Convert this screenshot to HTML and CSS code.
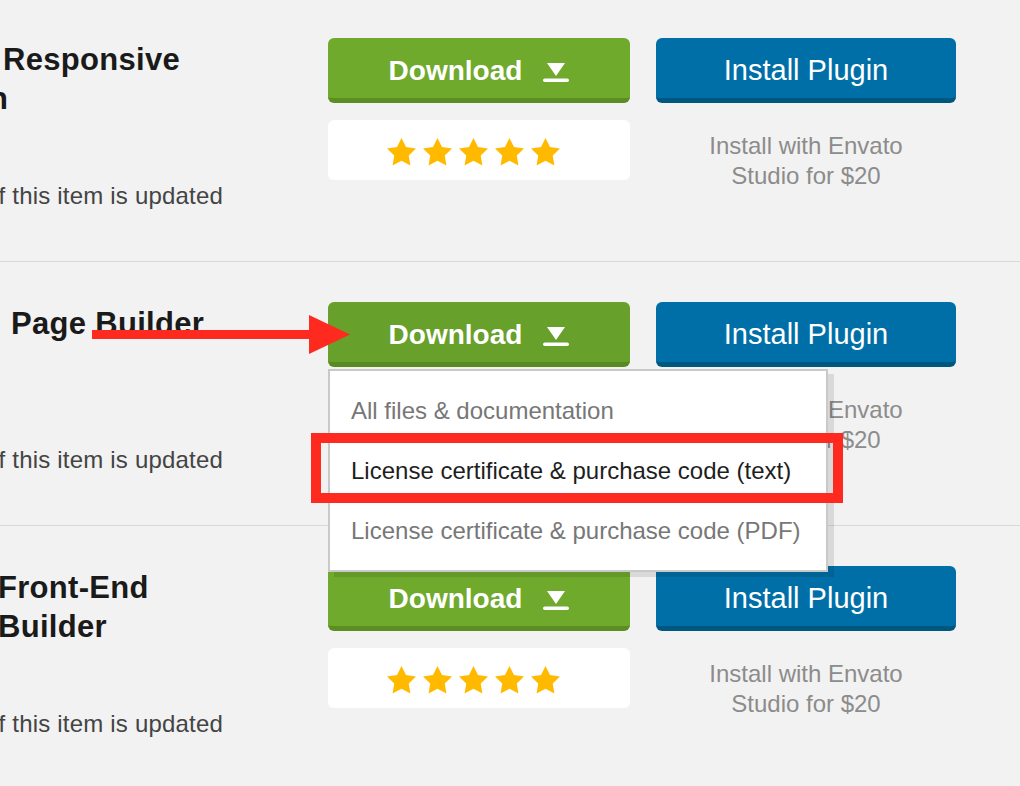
FILE: index.html
```html
<!DOCTYPE html>
<html lang="en">
<head>
<meta charset="utf-8">
<title>Downloads</title>
<link rel="stylesheet" href="styles.css">
</head>
<body>
<div class="page">

  <section class="row">
    <div class="info">
      <h2 class="title"><span class="ln ln-r1a">Responsive</span><span class="ln ln-r1b">Design</span></h2>
      <p class="desc">if this item is updated</p>
    </div>
    <div class="dl">
      <button class="btn-dl"><span>Download</span>
        <svg class="dl-ico" viewBox="0 0 26 20" width="26" height="20"><polygon points="4,0 22,0 13,13" fill="#fff"/><rect x="0" y="15.5" width="26" height="3.6" rx="1.8" fill="#fff"/></svg>
      </button>
      <div class="rating">
        <svg class="star" viewBox="2 2 20 19.3"><path d="M12 2l3.09 6.26L22 9.27l-5 4.87 1.18 6.88L12 17.77l-6.18 3.25L7 14.14 2 9.27l6.91-1.01L12 2z"/></svg>
        <svg class="star" viewBox="2 2 20 19.3"><path d="M12 2l3.09 6.26L22 9.27l-5 4.87 1.18 6.88L12 17.77l-6.18 3.25L7 14.14 2 9.27l6.91-1.01L12 2z"/></svg>
        <svg class="star" viewBox="2 2 20 19.3"><path d="M12 2l3.09 6.26L22 9.27l-5 4.87 1.18 6.88L12 17.77l-6.18 3.25L7 14.14 2 9.27l6.91-1.01L12 2z"/></svg>
        <svg class="star" viewBox="2 2 20 19.3"><path d="M12 2l3.09 6.26L22 9.27l-5 4.87 1.18 6.88L12 17.77l-6.18 3.25L7 14.14 2 9.27l6.91-1.01L12 2z"/></svg>
        <svg class="star" viewBox="2 2 20 19.3"><path d="M12 2l3.09 6.26L22 9.27l-5 4.87 1.18 6.88L12 17.77l-6.18 3.25L7 14.14 2 9.27l6.91-1.01L12 2z"/></svg>
      </div>
    </div>
    <div class="inst">
      <button class="btn-inst">Install Plugin</button>
      <p class="inst-note">Install with Envato<br>Studio for $20</p>
    </div>
  </section>

  <section class="row row-open">
    <div class="info">
      <h2 class="title"><span class="ln ln-r2a">Page Builder</span></h2>
      <p class="desc">if this item is updated</p>
    </div>
    <div class="dl">
      <button class="btn-dl btn-dl-active"><span>Download</span>
        <svg class="dl-ico" viewBox="0 0 26 20" width="26" height="20"><polygon points="4,0 22,0 13,13" fill="#fff"/><rect x="0" y="15.5" width="26" height="3.6" rx="1.8" fill="#fff"/></svg>
      </button>
      <div class="rating">
        <svg class="star" viewBox="2 2 20 19.3"><path d="M12 2l3.09 6.26L22 9.27l-5 4.87 1.18 6.88L12 17.77l-6.18 3.25L7 14.14 2 9.27l6.91-1.01L12 2z"/></svg>
        <svg class="star" viewBox="2 2 20 19.3"><path d="M12 2l3.09 6.26L22 9.27l-5 4.87 1.18 6.88L12 17.77l-6.18 3.25L7 14.14 2 9.27l6.91-1.01L12 2z"/></svg>
        <svg class="star" viewBox="2 2 20 19.3"><path d="M12 2l3.09 6.26L22 9.27l-5 4.87 1.18 6.88L12 17.77l-6.18 3.25L7 14.14 2 9.27l6.91-1.01L12 2z"/></svg>
        <svg class="star" viewBox="2 2 20 19.3"><path d="M12 2l3.09 6.26L22 9.27l-5 4.87 1.18 6.88L12 17.77l-6.18 3.25L7 14.14 2 9.27l6.91-1.01L12 2z"/></svg>
        <svg class="star" viewBox="2 2 20 19.3"><path d="M12 2l3.09 6.26L22 9.27l-5 4.87 1.18 6.88L12 17.77l-6.18 3.25L7 14.14 2 9.27l6.91-1.01L12 2z"/></svg>
      </div>
      <ul class="menu">
        <li class="menu-item">All files &amp; documentation</li>
        <li class="menu-item menu-item-hover">License certificate &amp; purchase code (text)</li>
        <li class="menu-item">License certificate &amp; purchase code (PDF)</li>
        <li class="annot-box"></li>
      </ul>
    </div>
    <div class="inst">
      <button class="btn-inst">Install Plugin</button>
      <p class="inst-note">Install with Envato<br>Studio for $20</p>
    </div>
    <svg class="annot-arrow" viewBox="0 0 258 40" width="258" height="40"><rect x="0" y="15" width="220" height="9" fill="#ff2a1f"/><polygon points="217,0 258,19.5 217,39" fill="#ff2a1f"/></svg>
  </section>

  <section class="row">
    <div class="info">
      <h2 class="title"><span class="ln ln-r3">Front-End</span><span class="ln ln-r3">Builder</span></h2>
      <p class="desc">if this item is updated</p>
    </div>
    <div class="dl">
      <button class="btn-dl"><span>Download</span>
        <svg class="dl-ico" viewBox="0 0 26 20" width="26" height="20"><polygon points="4,0 22,0 13,13" fill="#fff"/><rect x="0" y="15.5" width="26" height="3.6" rx="1.8" fill="#fff"/></svg>
      </button>
      <div class="rating">
        <svg class="star" viewBox="2 2 20 19.3"><path d="M12 2l3.09 6.26L22 9.27l-5 4.87 1.18 6.88L12 17.77l-6.18 3.25L7 14.14 2 9.27l6.91-1.01L12 2z"/></svg>
        <svg class="star" viewBox="2 2 20 19.3"><path d="M12 2l3.09 6.26L22 9.27l-5 4.87 1.18 6.88L12 17.77l-6.18 3.25L7 14.14 2 9.27l6.91-1.01L12 2z"/></svg>
        <svg class="star" viewBox="2 2 20 19.3"><path d="M12 2l3.09 6.26L22 9.27l-5 4.87 1.18 6.88L12 17.77l-6.18 3.25L7 14.14 2 9.27l6.91-1.01L12 2z"/></svg>
        <svg class="star" viewBox="2 2 20 19.3"><path d="M12 2l3.09 6.26L22 9.27l-5 4.87 1.18 6.88L12 17.77l-6.18 3.25L7 14.14 2 9.27l6.91-1.01L12 2z"/></svg>
        <svg class="star" viewBox="2 2 20 19.3"><path d="M12 2l3.09 6.26L22 9.27l-5 4.87 1.18 6.88L12 17.77l-6.18 3.25L7 14.14 2 9.27l6.91-1.01L12 2z"/></svg>
      </div>
    </div>
    <div class="inst">
      <button class="btn-inst">Install Plugin</button>
      <p class="inst-note">Install with Envato<br>Studio for $20</p>
    </div>
  </section>

</div>
</body>
</html>
```

FILE: styles.css
```css
* { box-sizing: border-box; }

html, body {
  margin: 0;
  padding: 0;
  background: #f2f2f2;
  overflow: hidden;
}

body {
  font-family: "Liberation Sans", Arial, sans-serif;
  color: #1a1a1a;
  width: 1020px;
  height: 786px;
}

.page {
  display: flex;
  flex-direction: column;
  margin-top: -2px;
}

.row {
  position: relative;
  display: flex;
  gap: 26px;
  height: 264px;
  padding-top: 40px;
  border-bottom: 1px solid #d9d9d9;
}

.row-open { z-index: 2; }

/* left column */
.info {
  flex: none;
  width: 302px;
  position: relative;
}

.title {
  margin: 0;
  padding-top: 2px;
  min-height: 80px;
  font-size: 31px;
  line-height: 39px;
  font-weight: 700;
  letter-spacing: 0.3px;
  color: #1a1a1a;
  white-space: nowrap;
}

.ln { display: block; }
.ln-r1a { margin-left: 3px; }
.ln-r1b { margin-left: -97px; }
.ln-r2a { margin-left: 11px; }
.ln-r3 { margin-left: -2px; }

.desc {
  margin: 63px 0 0 -7px;
  font-size: 24px;
  line-height: 30px;
  letter-spacing: 0.2px;
  color: #444;
  white-space: nowrap;
}

/* download column */
.dl {
  flex: none;
  width: 302px;
  position: relative;
}

.btn-dl {
  display: flex;
  align-items: center;
  justify-content: center;
  gap: 21px;
  width: 100%;
  height: 65px;
  padding: 6px 0 0;
  border: none;
  border-bottom: 5px solid #5a8d22;
  border-radius: 6px;
  background: #70aa2d;
  color: #fff;
  font-family: "Liberation Sans", Arial, sans-serif;
  font-size: 28px;
  font-weight: 700;
}

.btn-dl-active {
  background: #67a02a;
  border-bottom-color: #578a22;
}

.dl-ico { display: block; margin-top: 3px; }

.rating {
  display: flex;
  align-items: center;
  justify-content: center;
  gap: 7px;
  height: 60px;
  margin-top: 17px;
  padding: 4px 12px 0 0;
  background: #fff;
  border-radius: 6px;
}

.star {
  width: 29px;
  height: 28px;
  fill: #ffba00;
}

/* install column */
.inst {
  flex: none;
  width: 300px;
  text-align: center;
}

.btn-inst {
  display: block;
  width: 100%;
  height: 65px;
  padding: 4px 0 0;
  border: none;
  border-bottom: 5px solid #00577f;
  border-radius: 6px;
  background: #006fa7;
  color: #fff;
  font-family: "Liberation Sans", Arial, sans-serif;
  font-size: 29px;
  font-weight: 400;
}

.inst-note {
  margin: 28px 0 0;
  font-size: 24px;
  line-height: 30px;
  color: #8c8c8c;
}

/* dropdown menu */
.menu {
  position: absolute;
  left: 0;
  top: 67px;
  width: 500px;
  height: 203px;
  margin: 0;
  padding: 10px 0 0;
  list-style: none;
  background: #fff;
  border: 2px solid #c9c9c9;
  box-shadow: 6px 5px 0 rgba(0, 0, 0, 0.1);
}

.menu-item {
  height: 60px;
  padding-left: 21px;
  font-size: 24px;
  line-height: 60px;
  color: #777;
  white-space: nowrap;
}

.menu-item-hover { color: #1e1e1e; }

.annot-box {
  position: absolute;
  left: -19px;
  top: 62px;
  width: 532px;
  height: 70px;
  border: 10px solid #ff2a1f;
}

.annot-arrow {
  position: absolute;
  left: 92px;
  top: 53px;
}
```
